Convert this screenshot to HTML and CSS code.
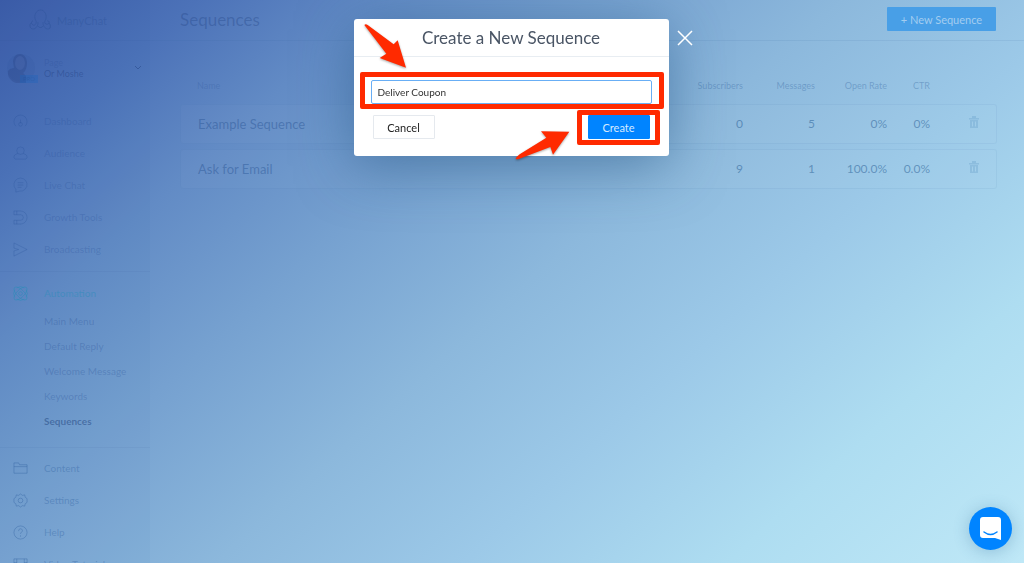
FILE: index.html
```
<!DOCTYPE html>
<html lang="en">
<head>
    <meta charset="utf-8">
    <title>Sequences - ManyChat</title>
    <link rel="stylesheet" href="styles.css">
</head>
<body>

<div class="app">
    <!-- Sidebar -->
    <aside class="sidebar">
        <div class="logo">
            <svg width="22" height="22" viewBox="0 0 22 22"><path d="M7 12C4 7 7 1 11.500 1s7.500 6 4.500 11c-1 2 1 4 3 3s1-4-1-3M7 12c1 2-1 5-3 4s-2-4 0-4M9 13c0 4-2 7-5 7s-4-4-2-6M14 13c0 4 2 7 5 7s3-4 1-6M9 17c1 2 4 2 5 0"/></svg>
            <span>ManyChat</span>
        </div>
        <div class="account">
            <div class="avatar">
                <svg width="30" height="30" viewBox="0 0 30 30"><circle class="halo" cx="15" cy="15" r="14"/><path d="M7 9c0-5 3-8 7-8s7 4 7 9-2 9-4 10l3 3v7H10C5 28 1 24 2 18c1-2 4-3 6-3z"/><ellipse class="face" cx="14" cy="10" rx="5" ry="7"/></svg>
                <span class="pro">PRO</span>
            </div>
            <div class="account-name">
                <span class="faint">Page</span>
                <span>Or Moshe</span>
            </div>
            <svg class="chevron" width="8" height="6" viewBox="0 0 8 6"><path d="M1 1l3 3 3-3"/></svg>
        </div>

        <nav>
            <div class="nav-group">
                <a class="nav-item faint" href="#"><svg viewBox="0 0 16 16"><path d="M3 13a7 7 0 1 1 10 0M8 6v4"/><circle cx="8" cy="11" r="2"/></svg>Dashboard</a>
                <a class="nav-item faint" href="#"><svg viewBox="0 0 16 16"><circle cx="8" cy="5" r="4"/><path d="M5 8c-3 1-4 2-4 4 0 1 1 2 2 2h10c1 0 2-1 2-2 0-2-1-3-4-4"/></svg>Audience</a>
                <a class="nav-item faint" href="#"><svg viewBox="0 0 16 16"><path d="M3 15v-3a7 7 0 1 1 4 2zM5 5h6M5 7.500h6M5 10h4"/></svg>Live Chat</a>
                <a class="nav-item faint" href="#"><svg viewBox="0 0 16 16"><path d="M1 1h7a7 7 0 0 1 0 14H1v-4h7a3 3 0 0 0 0-6H1zM4 1v4M4 11v4"/></svg>Growth Tools</a>
                <a class="nav-item faint" href="#"><svg viewBox="0 0 16 16"><path d="M1 1l14 7-14 7V9.500L6 8 1 6.500z"/></svg>Broadcasting</a>
            </div>
            <div class="nav-group automation">
                <a class="nav-item current" href="#"><svg viewBox="0 0 16 16"><ellipse cx="8" cy="8" rx="9" ry="4" transform="rotate(45 8 8)"/><ellipse cx="8" cy="8" rx="9" ry="4" transform="rotate(-45 8 8)"/><circle cx="8" cy="8" r="2"/><path d="M4 2a7 7 0 0 1 8 0M4 14a7 7 0 0 0 8 0M2 4a7 7 0 0 0 0 8M14 4a7 7 0 0 1 0 8"/></svg>Automation</a>
                <a class="sub-item" href="#">Main Menu</a>
                <a class="sub-item" href="#">Default Reply</a>
                <a class="sub-item" href="#">Welcome Message</a>
                <a class="sub-item" href="#">Keywords</a>
                <a class="sub-item selected" href="#">Sequences</a>
            </div>
            <div class="nav-group">
                <a class="nav-item" href="#"><svg viewBox="0 0 16 16"><path d="M1 13V2h5l1 2h8v9zM1 6h14"/></svg>Content</a>
                <a class="nav-item" href="#"><svg viewBox="0 0 16 16"><path d="M8 1l2 1.500 2.500-.5.500 2.500L15 6v4l-2 1.500-.5 2.500-2.500-.5L8 15l-2-1.500-2.500.5-.5-2.500L1 10V6l2-1.500L3.500 2l2.500.5z"/><circle cx="8" cy="8" r="2.500"/></svg>Settings</a>
                <a class="nav-item" href="#"><svg viewBox="0 0 16 16"><circle cx="8" cy="8" r="7"/><path d="M6 6.500C6 3 10 3.500 10 6c0 1.500-2 2-2 3.500M8 11v1.500"/></svg>Help</a>
                <a class="nav-item" href="#"><svg viewBox="0 0 16 16"><path d="M1 2h14v12H1zM4 2v12M12 2v12M4 8h8M1 6h3M12 6h3"/></svg>Video Tutorials</a>
            </div>
        </nav>
    </aside>

    <!-- Page content -->
    <main class="content">
        <header class="topbar">
            <h1>Sequences</h1>
            <button type="button" class="new-sequence">+ New Sequence</button>
        </header>

        <table class="sequences">
            <colgroup>
                <col>
                <col class="col-subscribers">
                <col class="col-stat">
                <col class="col-stat">
                <col class="col-ctr">
                <col class="col-delete">
            </colgroup>
            <thead>
                <tr><th>Name</th><th>Subscribers</th><th>Messages</th><th>Open Rate</th><th>CTR</th><th></th></tr>
            </thead>
            <tbody>
                <tr>
                    <td>Example Sequence</td><td>0</td><td>5</td><td>0%</td><td>0%</td>
                    <td><svg class="trash" width="10" height="12" viewBox="0 0 10 12"><path d="M0 2h3V0h4v2h3v1.500H0zM1 4h8v8H1zM3 5.500v5h1v-5zM6 5.500v5h1v-5z"/></svg></td>
                </tr>
                <tr>
                    <td>Ask for Email</td><td>9</td><td>1</td><td>100.0%</td><td>0.0%</td>
                    <td><svg class="trash" width="10" height="12" viewBox="0 0 10 12"><path d="M0 2h3V0h4v2h3v1.500H0zM1 4h8v8H1zM3 5.500v5h1v-5zM6 5.500v5h1v-5z"/></svg></td>
                </tr>
            </tbody>
        </table>
    </main>
</div>

<!-- Create sequence dialog -->
<div class="overlay">
    <form class="modal" role="dialog" aria-labelledby="modal-title">
        <h2 id="modal-title">Create a New Sequence</h2>
        <div class="modal-body">
            <div class="field">
                <input type="text" id="name" name="name" value="Deliver Coupon" aria-label="Sequence name">
                <span class="highlight"></span>
            </div>
            <div class="buttons">
                <button type="button" class="cancel">Cancel</button>
                <div class="create-wrap">
                    <button type="button" class="create">Create</button>
                    <span class="highlight"></span>
                </div>
            </div>
        </div>
        <button type="button" class="close" aria-label="Close">
            <svg width="16" height="16" viewBox="0 0 16 16"><path d="M1 1l14 14M15 1L1 15"/></svg>
        </button>
        <svg class="arrow arrow-input" width="46" height="46" viewBox="68 68 138 138"><path d="M72 74q4-4 10 0l78 58 12-12 25 82-79-29 20-13z"/></svg>
        <svg class="arrow arrow-create" width="58" height="32" viewBox="522 386 174 96"><path d="M527 475q2-5 12-13l80-50-16-19 85 1-49 69-8-23-95 36q-7 2-9-1z"/></svg>
    </form>
</div>

<button type="button" class="chat" aria-label="Open chat">
    <svg width="22" height="24" viewBox="0 0 22 24"><path class="bubble" d="M3 0h15q3 0 3 3v20l-6-2H3q-3 0-3-3V3q0-3 3-3z"/><path class="smile" d="M4 15q6.500 5 13 0"/></svg>
</button>

</body>
</html>
```
FILE: styles.css
```
* {
    box-sizing: border-box;
}
body {
    margin: 0;
    height: 100vh;
    overflow: hidden;
    font-family: Lato, "Liberation Sans", sans-serif;
    font-size: 10px;
    background: linear-gradient(138deg, #3b5ba8 0%, #4c72b8 12%, #628bc5 23%, #76a1d0 36%, #8cb8dc 51%, #9cc9e8 66%, #aeddf1 82%, #bfe8f7 100%);
}
button,
input {
    font-family: inherit;
    cursor: pointer;
}
a {
    text-decoration: none;
}
svg {
    fill: none;
    stroke: currentColor;
}
.app {
    display: flex;
    height: 100vh;
}

/* Sidebar */
.sidebar {
    flex: 0 0 150px;
    color: rgba(30, 70, 140, 0.25);
    background-color: rgba(40, 80, 150, 0.03);
}
.logo {
    display: flex;
    align-items: center;
    gap: 6px;
    height: 41px;
    padding-left: 29px;
    font-size: 11px;
    border-bottom: 1px solid rgba(30, 70, 140, 0.06);
}
.account {
    display: flex;
    align-items: center;
    height: 54px;
    padding: 0 6px;
}
.avatar {
    position: relative;
    width: 30px;
    height: 30px;
    margin-right: 8px;
}
.avatar svg {
    fill: rgba(30, 50, 110, 0.2);
    stroke: none;
}
.avatar .halo {
    fill: rgba(40, 80, 150, 0.1);
}
.avatar .face {
    fill: rgba(90, 120, 190, 0.25);
}
.pro {
    position: absolute;
    right: -2px;
    bottom: 0;
    padding: 0 3px;
    font-size: 6px;
    line-height: 8px;
    background-color: rgba(30, 100, 190, 0.35);
}
.account-name {
    flex: 1;
    display: flex;
    flex-direction: column;
    line-height: 11px;
    font-size: 9px;
    color: rgba(25, 55, 120, 0.35);
}
.chevron {
    margin-right: 2px;
    color: rgba(25, 55, 120, 0.4);
}
.faint {
    color: rgba(30, 70, 140, 0.2);
}
.nav-group {
    padding: 10px 0 6px;
}
.nav-item {
    display: flex;
    align-items: center;
    height: 32px;
    padding-left: 13px;
    color: rgba(40, 90, 155, 0.35);
}
.nav-item.faint {
    color: rgba(35, 75, 150, 0.25);
}
.nav-item svg {
    width: 15px;
    height: 15px;
    margin-right: 16px;
    overflow: visible;
}
.nav-item.current {
    color: rgba(40, 140, 185, 0.5);
}
.automation {
    padding: 5px 0 13px;
    border-top: 1px solid rgba(30, 70, 140, 0.06);
    border-bottom: 1px solid rgba(30, 70, 140, 0.06);
}
.automation + .nav-group {
    padding-top: 4px;
}
.sub-item {
    display: block;
    padding-left: 44px;
    line-height: 25px;
    color: rgba(40, 80, 150, 0.3);
}
.sub-item.selected {
    font-weight: bold;
    color: rgba(20, 55, 115, 0.45);
}

/* Content */
.content {
    flex: 1;
}
.topbar {
    display: flex;
    justify-content: space-between;
    align-items: center;
    height: 41px;
    padding: 0 28px 2px 30px;
    border-bottom: 1px solid rgba(50, 100, 160, 0.1);
}
.topbar h1 {
    margin: 0;
    font-size: 17px;
    font-weight: normal;
    color: rgba(30, 65, 130, 0.32);
}
.new-sequence {
    width: 109px;
    height: 24px;
    padding: 0;
    font-size: 11px;
    color: #a3cdf0;
    background-color: #489fe7;
    border: none;
    border-radius: 1px;
}
.sequences {
    width: calc(100% - 57px);
    margin: 28px 27px 0 30px;
    table-layout: fixed;
    border-spacing: 0 5px;
}
.col-subscribers {
    width: 80px;
}
.col-stat {
    width: 72px;
}
.col-ctr {
    width: 43px;
}
.col-delete {
    width: 67px;
}
.sequences th {
    height: 25px;
    padding: 0 0 2px;
    font-size: 9px;
    font-weight: normal;
    text-align: right;
    color: rgba(50, 100, 160, 0.38);
}
.sequences td {
    height: 40px;
    padding: 0 0 2px;
    font-size: 12px;
    text-align: right;
    color: rgba(35, 90, 145, 0.5);
    background-color: rgba(255, 255, 255, 0.02);
    border: 1px solid rgba(50, 100, 160, 0.08);
    border-width: 1px 0;
}
.sequences th:first-child,
.sequences td:first-child {
    padding-left: 17px;
    text-align: left;
}
.sequences th:first-child {
    color: rgba(40, 80, 150, 0.25);
}
.sequences td:first-child {
    padding-bottom: 0;
    font-size: 13px;
    color: rgba(30, 75, 140, 0.4);
    border-left-width: 1px;
    border-radius: 3px 0 0 3px;
}
.sequences td:last-child {
    padding-right: 17px;
    border-right-width: 1px;
    border-radius: 0 3px 3px 0;
}
.trash {
    fill: rgba(70, 130, 180, 0.22);
    fill-rule: evenodd;
    stroke: none;
}

/* Dialog */
.overlay {
    position: fixed;
    inset: 0;
    padding: 19px 2px 0 0;
}
.modal {
    position: relative;
    width: 315px;
    margin: 0 auto;
    background-color: #fff;
    border-radius: 3px;
    box-shadow: 0 10px 55px rgba(30, 80, 125, 0.5);
}
.modal h2 {
    margin: 0;
    font-size: 17px;
    line-height: 37px;
    font-weight: normal;
    text-align: center;
    color: #4a5565;
    border-bottom: 1px solid #e8edf2;
}
.modal-body {
    padding: 23px 17px 17px;
}
.field {
    position: relative;
}
.field input {
    display: block;
    width: 100%;
    height: 24px;
    padding: 0 6px;
    font-size: 10px;
    color: #333;
    border: 1px solid #68aef5;
    border-radius: 2px;
    outline: none;
}
.buttons {
    display: flex;
    justify-content: space-between;
    padding: 11px 2px 0;
}
.buttons button {
    display: block;
    width: 62px;
    height: 24px;
    padding: 0;
    font-size: 11px;
    border: 1px solid #e5e9ee;
    border-radius: 1px;
}
.buttons .cancel {
    color: #222;
    background-color: #fff;
}
.buttons .create {
    color: #d5eaff;
    background-color: #0084ff;
    border-color: #0084ff;
}
.create-wrap {
    position: relative;
}
.close {
    position: absolute;
    top: 11px;
    right: -24px;
    padding: 0;
    color: #fff;
    background: none;
    border: none;
}
.close svg {
    display: block;
    stroke-width: 1.5;
}

/* Callouts */
.highlight {
    position: absolute;
    inset: -8px -12px -5px -11px;
    border: 5px solid #ff2a00;
    border-radius: 2px;
    pointer-events: none;
}
.create-wrap .highlight {
    inset: -5px -10px -6px -11px;
}
.arrow {
    position: absolute;
    fill: #ff2a00;
    stroke: none;
    overflow: visible;
    filter: drop-shadow(0 1px 1px rgba(0, 0, 0, 0.35));
}
.arrow-input {
    top: 4px;
    left: 9px;
}
.arrow-create {
    top: 110px;
    left: 160px;
}

/* Chat launcher */
.chat {
    position: fixed;
    right: 12px;
    bottom: 13px;
    display: flex;
    justify-content: center;
    align-items: center;
    width: 43px;
    height: 43px;
    padding: 0;
    background-color: #0084ff;
    border: none;
    border-radius: 50%;
    box-shadow: 0 2px 16px rgba(40, 100, 150, 0.3);
}
.bubble {
    fill: #fff;
    stroke: none;
}
.smile {
    stroke: #0084ff;
    stroke-width: 1.5;
    stroke-linecap: round;
}
```
